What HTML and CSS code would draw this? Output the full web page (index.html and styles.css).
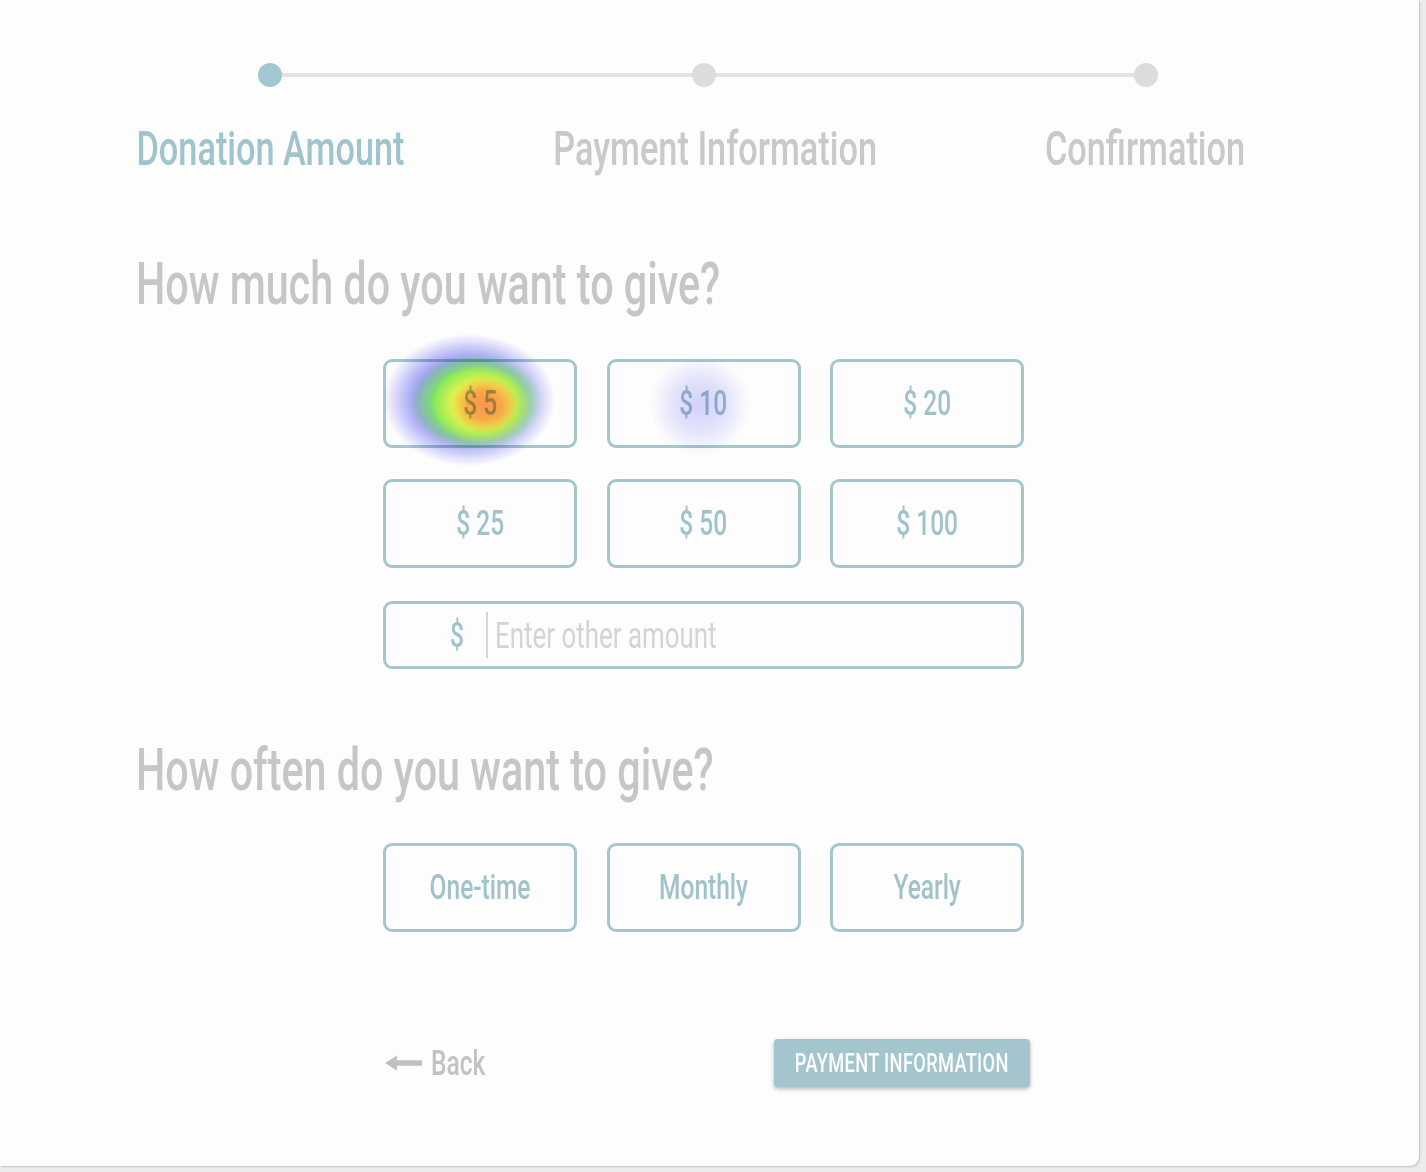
FILE: index.html
```html
<!DOCTYPE html>
<html lang="en">
<head>
<meta charset="utf-8">
<title>Donate</title>
<link rel="stylesheet" href="styles.css">
</head>
<body>
<div class="card">
  <div class="stepper">
    <span class="dot dot-active"></span>
    <span class="line line-a"></span>
    <span class="dot"></span>
    <span class="line line-b"></span>
    <span class="dot"></span>
  </div>
  <div class="step-labels">
    <div class="step-label active"><span class="nt">Donation Amount</span></div>
    <div class="step-label"><span class="nt">Payment Information</span></div>
    <div class="step-label"><span class="nt">Confirmation</span></div>
  </div>

  <h2 class="question q1"><span class="nt nt-left">How much do you want to give?</span></h2>
  <div class="options">
    <div class="amounts">
      <button class="opt"><span class="nt">$ 5</span></button>
      <button class="opt"><span class="nt">$ 10</span></button>
      <button class="opt"><span class="nt">$ 20</span></button>
      <button class="opt"><span class="nt">$ 25</span></button>
      <button class="opt"><span class="nt">$ 50</span></button>
      <button class="opt"><span class="nt">$ 100</span></button>
    </div>
    <div class="other">
      <span class="cur"><span class="nt">$</span></span>
      <span class="sep"></span>
      <span class="placeholder"><span class="nt nt-left">Enter other amount</span></span>
    </div>
    <div class="heat heat-a"></div>
    <div class="heat heat-b"></div>
  </div>

  <h2 class="question q2"><span class="nt nt-left">How often do you want to give?</span></h2>
  <div class="freq">
    <button class="opt"><span class="nt">One-time</span></button>
    <button class="opt"><span class="nt">Monthly</span></button>
    <button class="opt"><span class="nt">Yearly</span></button>
  </div>

  <div class="footer">
    <a class="back"><svg class="arrow" width="37" height="16" viewBox="0 0 37 16"><path d="M0 8 L12 0.5 L12 5.2 L37 5.2 L37 10.8 L12 10.8 L12 15.5 Z" fill="#c0c0c0"/></svg><span class="back-text"><span class="nt nt-left">Back</span></span></a>
    <button class="next"><span class="nt">PAYMENT INFORMATION</span></button>
  </div>
</div>
</body>
</html>
```

FILE: styles.css
```css
html, body {
  margin: 0;
  padding: 0;
}
body {
  background: #ececec;
  width: 1426px;
  height: 1172px;
  overflow: hidden;
  font-family: Roboto, "Liberation Sans", sans-serif;
  font-weight: 500;
}
.nt {
  display: inline-block;
  white-space: nowrap;
  transform: scaleX(0.7);
  transform-origin: center center;
}
.nt-left { transform-origin: left center; }

.card {
  width: 1419px;
  height: 1166px;
  background: #fdfdfd;
  border-radius: 0 0 9px 0;
  box-shadow: 1px 1px 2px rgba(0,0,0,0.18);
  box-sizing: border-box;
  padding-top: 63px;
}
.stepper {
  display: flex;
  align-items: center;
  margin-left: 258px;
  height: 24px;
}
.dot {
  width: 24px;
  height: 24px;
  border-radius: 50%;
  background: #dcdcdc;
  flex: none;
}
.dot-active { background: #a2c7d0; }
.line {
  height: 4px;
  background: #e2e2e2;
  flex: none;
}
.line-a { width: 410px; }
.line-b { width: 418px; }

.step-labels {
  display: grid;
  grid-template-columns: 440px 450px 410px;
  margin-left: 50px;
  margin-top: 37px;
}
.step-label {
  display: flex;
  justify-content: center;
  font-size: 49px;
  line-height: 49px;
  height: 49px;
  color: #c9c9c9;
  white-space: nowrap;
}
.step-label.active { color: #a0c4cd; }

.question {
  margin: 0;
  margin-left: 136px;
  font-weight: 500;
  font-size: 59px;
  line-height: 59px;
  height: 59px;
  color: #c6c6c6;
}
.q1 { margin-top: 81px; }
.q2 { margin-top: 71px; }

.options {
  position: relative;
  margin-left: 383px;
  width: 641px;
  margin-top: 46px;
}
.amounts, .freq {
  display: grid;
  grid-template-columns: repeat(3, 194px);
  column-gap: 29.5px;
  row-gap: 31px;
}
.freq {
  margin-left: 383px;
  width: 641px;
  margin-top: 44px;
}
.opt {
  height: 89px;
  box-sizing: border-box;
  border: 3px solid #a6c6ce;
  border-radius: 9px;
  background: transparent;
  font-family: inherit;
  font-weight: 500;
  font-size: 35px;
  color: #a0c2cb;
  padding: 0;
  display: flex;
  align-items: center;
  justify-content: center;
}
.other {
  margin-top: 33px;
  height: 68px;
  box-sizing: border-box;
  border: 3px solid #a6c6ce;
  border-radius: 9px;
  display: flex;
  align-items: center;
}
.cur {
  font-size: 35px;
  color: #a0c2cb;
  margin-left: 60px;
  width: 22px;
  display: flex;
  justify-content: center;
}
.sep {
  width: 2px;
  height: 46px;
  background: #d6d6d6;
  margin-left: 18px;
}
.placeholder {
  font-size: 37px;
  color: #d4d4d4;
  margin-left: 7px;
  font-weight: 400;
}
.heat {
  position: absolute;
  pointer-events: none;
  mix-blend-mode: multiply;
}
.heat-a {
  left: 0px;
  top: -25px;
  width: 180px;
  height: 135px;
  background:
    radial-gradient(ellipse 34px 28px at 102px 71px, rgba(250,150,80,1) 0%, rgba(252,165,70,0.95) 50%, rgba(255,210,60,0) 100%),
    radial-gradient(ellipse 50px 40px at 98px 70px, rgba(250,240,80,1) 0%, rgba(238,245,75,0.95) 55%, rgba(170,240,70,0) 100%),
    radial-gradient(ellipse 66px 49px at 93px 68px, rgba(120,240,85,1) 0%, rgba(120,240,85,0.95) 62%, rgba(110,200,200,0) 100%),
    radial-gradient(ellipse 86px 66px at 86px 66px, rgba(95,95,240,0.8) 0%, rgba(100,100,242,0.65) 60%, rgba(150,150,250,0) 100%);
}
.heat-b {
  left: 262px;
  top: -9px;
  width: 110px;
  height: 110px;
  background: radial-gradient(circle 50px at 50% 50%, rgba(110,110,245,0.3) 0%, rgba(130,130,245,0.2) 55%, rgba(150,150,250,0) 100%);
}

.footer {
  display: flex;
  justify-content: space-between;
  align-items: center;
  margin-left: 385px;
  width: 645px;
  margin-top: 107px;
}
.back {
  display: flex;
  align-items: center;
  gap: 9px;
  font-size: 35px;
  color: #c2c2c2;
}
.back-text { width: 60px; }
.next {
  width: 256px;
  height: 48px;
  border: none;
  border-radius: 4px;
  background: #a3c6ce;
  color: #ffffff;
  font-family: inherit;
  font-weight: 500;
  font-size: 26px;
  letter-spacing: 0.5px;
  box-shadow: 0 2px 4px rgba(0,0,0,0.28);
  padding: 0;
  display: flex;
  align-items: center;
  justify-content: center;
}
```
